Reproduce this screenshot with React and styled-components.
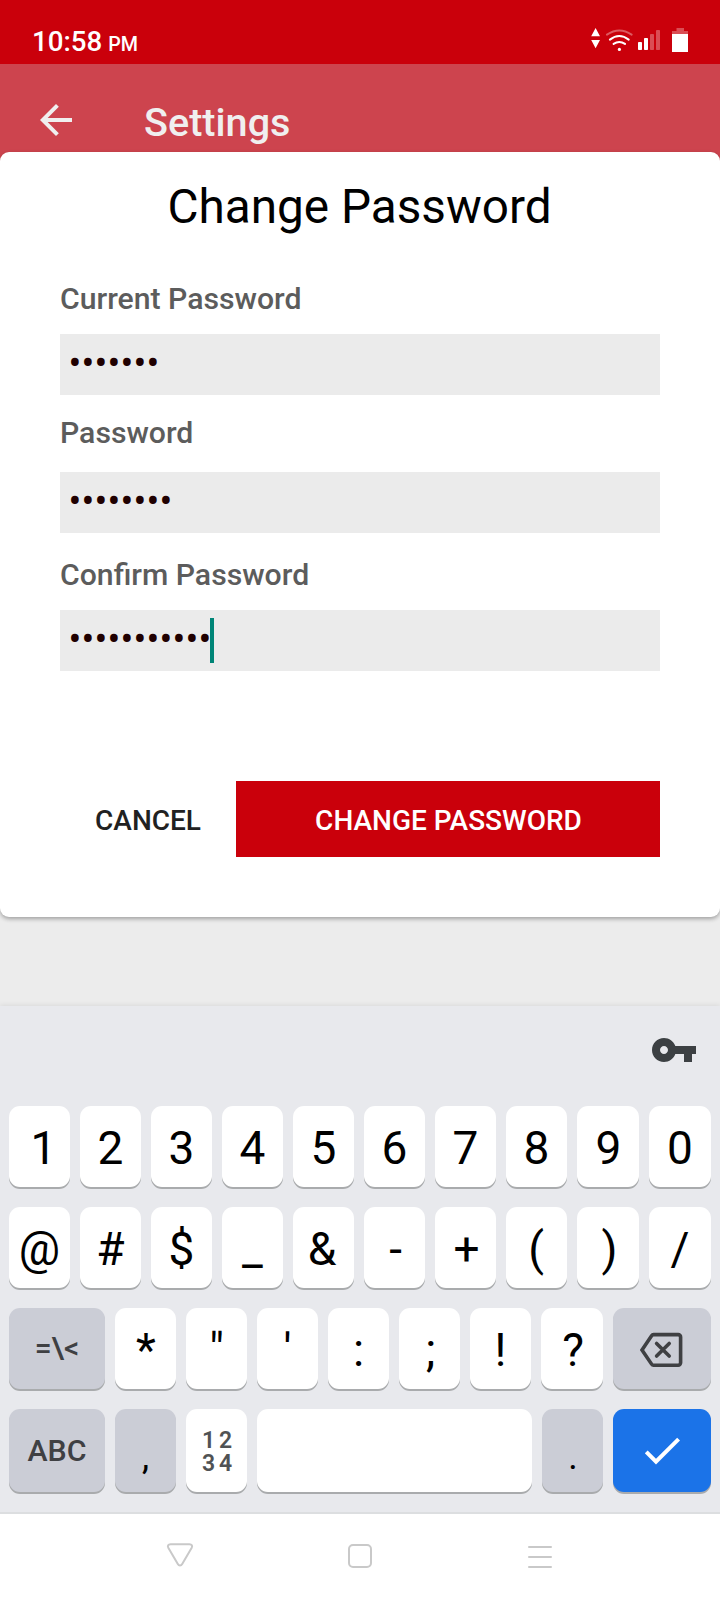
import React from "react";
import styled, { createGlobalStyle } from "styled-components";

const GlobalStyle = createGlobalStyle`
  *, *::before, *::after { box-sizing: border-box; }
  body {
    margin: 0;
    background: #ececec;
    font-family: Roboto, "Liberation Sans", sans-serif;
  }
`;

const Screen = styled.div`
  width: 720px;
  height: 1600px;
  display: flex;
  flex-direction: column;
  overflow: hidden;
  background: #ececec;
`;

const StatusBar = styled.header`
  flex: none;
  height: 64px;
  padding: 27px 32px 0 32px;
  display: flex;
  align-items: flex-start;
  justify-content: space-between;
  background: #ca000b;
  color: #fff;
`;

const Clock = styled.div`
  font-size: 27.7px;
  font-weight: 500;
  line-height: 29px;
  white-space: pre;
`;

const Meridiem = styled.span`
  font-size: 19.7px;
  margin-left: 6px;
`;

const StatusIcons = styled.svg`
  width: 98px;
  height: 26px;
  display: block;
`;

const AppBar = styled.div`
  flex: none;
  height: 112px;
  padding: 32px 32px 0;
  display: flex;
  align-items: flex-start;
  gap: 64px;
  background: #cd444e;
`;

const Icon = styled.svg`
  flex: none;
  display: block;
  width: 48px;
  height: 48px;
  fill: ${(p) => p.$color};
`;

const AppTitle = styled.h1`
  margin: 3px 0 0;
  font-size: 39.6px;
  font-weight: 500;
  line-height: 48px;
  color: #f0efef;
`;

const Card = styled.main`
  flex: none;
  position: relative;
  height: 765px;
  margin-top: -24px;
  padding: 25px 60px 60px;
  display: flex;
  flex-direction: column;
  border-radius: 9px;
  background: #fff;
  box-shadow: 0 2px 4px rgba(0, 0, 0, 0.32);
`;

const CardTitle = styled.h2`
  margin: 0 1px 0 0;
  font-size: 47.7px;
  font-weight: 400;
  line-height: 60px;
  text-align: center;
  color: #000;
`;

const Field = styled.label`
  display: flex;
  flex-direction: column;
  height: ${(p) => p.$height}px;
  justify-content: flex-end;
  gap: ${(p) => p.$gap}px;
`;

const FieldLabel = styled.span`
  font-size: 30.2px;
  font-weight: 500;
  line-height: 36px;
  color: #5c5c5c;
`;

const FieldBox = styled.span`
  height: 61px;
  padding: 8px 8px 8px 8.5px;
  display: flex;
  background: #ebebeb;
`;

const Dots = styled.span`
  font-size: 38px;
  line-height: 43px;
  letter-spacing: 0.19px;
  color: #200000;
`;

const Caret = styled.span`
  width: 4px;
  height: 45px;
  margin-left: -1.5px;
  background: #008577;
`;

const Actions = styled.div`
  margin-top: auto;
  height: 76px;
  display: flex;
`;

const Button = styled.button`
  flex: ${(p) => (p.$primary ? "1" : "0 0 176px")};
  border: 0;
  padding: 3px 0 0 ${(p) => (p.$primary ? 1 : 0)}px;
  font: 500 28px/32px Roboto, "Liberation Sans", sans-serif;
  color: ${(p) => (p.$primary ? "#fff" : "#212121")};
  background: ${(p) => (p.$primary ? "#ca000b" : "transparent")};
`;

const Backdrop = styled.div`
  flex: none;
  height: 89px;
`;

const Keyboard = styled.section`
  flex: none;
  height: 508px;
  padding: 0 9px;
  border-bottom: 2px solid #dcdee0;
  background: #e8e9ed;
  box-shadow: 0 -1px 5px rgba(0, 0, 0, 0.08);
`;

const Toolbar = styled.div`
  height: 100px;
  padding: 20px 13px 0 0;
  display: flex;
  justify-content: flex-end;
`;

const KeyRow = styled.div`
  display: grid;
  grid-template-columns: ${(p) => p.$columns};
  gap: 10px;
  height: ${(p) => p.$height || 81}px;
  margin-bottom: 20px;
`;

const tones = {
  plain: { bg: "#fff", fg: "#000" },
  muted: { bg: "#cbcdd6", fg: "#3f4043" },
  punct: { bg: "#cbcdd6", fg: "#000" },
  enter: { bg: "#1b73e8", fg: "#fff" },
};

const Key = styled.div`
  display: flex;
  align-items: center;
  justify-content: center;
  padding-top: ${(p) => p.$drop || 0}px;
  padding-bottom: ${(p) => p.$lift || 0}px;
  text-indent: ${(p) => p.$nudge || 0}px;
  border-radius: 11px;
  font-size: ${(p) => p.$size || 46}px;
  font-weight: ${(p) => p.$weight || 400};
  line-height: 54px;
  color: ${(p) => tones[p.$tone || "plain"].fg};
  background: ${(p) => tones[p.$tone || "plain"].bg};
  box-shadow: 0 2px 0 #a9abad;
`;

const NumberPad = styled.div`
  padding: 4px 0 0 5px;
  font-size: 23px;
  font-weight: 600;
  line-height: 22.5px;
  letter-spacing: 3.8px;
  white-space: pre-line;
  color: #505254;
`;

const TEN = "repeat(8, 61px) 62px 62px";

// Optical centring of glyphs with uneven side bearings.
const NUDGE = { "1": 8, "&": -3, "-": 2, "+": 2, "(": -1, ")": 3, "9": 1, "*": 1, ";": 2, "?": 2 };

const CharKeys = ({ chars }) =>
  [...chars].map((c) => (
    <Key key={c} $drop={3} $nudge={NUDGE[c]}>
      {c}
    </Key>
  ));

const NavBar = styled.nav`
  flex: 1;
  padding: 28px 90px 0;
  display: grid;
  grid-template-columns: repeat(3, 180px);
  justify-items: center;
  align-items: start;
  background: #fff;
`;

const NavIcon = styled.svg`
  width: 28px;
  height: 28px;
  display: block;
  fill: none;
  stroke: #c9c9c9;
  stroke-width: 2;
  stroke-linecap: round;
  stroke-linejoin: round;
`;

export default function App() {
  return (
    <>
      <GlobalStyle />
      <Screen>
        <StatusBar>
          <Clock>
            10:58<Meridiem>PM</Meridiem>
          </Clock>
          <StatusIcons viewBox="590 27 98 26" fill="#fff">
            <path d="M595.6 28l4.4 8.2h-8.8zM595.6 48.3l4.4-8.4h-8.8z" />
            <g fill="none" stroke="#fff" strokeWidth="2" strokeLinecap="round">
              <path d="M607 34.7q12.3-8.4 24.6 0" opacity=".35" />
              <path d="M609.9 39.6q9.4-7.2 18.8 0" />
              <path d="M613.6 43.9q5.7-3.8 11.4 0" />
            </g>
            <circle cx="619.4" cy="49.4" r="1.6" />
            <rect x="638" y="42" width="4" height="8" rx=".8" />
            <rect x="644" y="38" width="4" height="12" rx=".8" />
            <rect x="650" y="34" width="4" height="16" rx=".8" opacity=".3" />
            <rect x="656" y="30" width="4" height="20" rx=".8" opacity=".3" />
            <path d="M672 34v-3h4.5v-3h7.5v3h4v3z" opacity=".3" />
            <rect x="672" y="34" width="16" height="18" />
          </StatusIcons>
        </StatusBar>

        <AppBar>
          <Icon viewBox="0 0 24 24" $color="#f0efef">
            <path d="M20 11H7.83l5.59-5.59L12 4l-8 8 8 8 1.41-1.41L7.83 13H20v-2z" />
          </Icon>
          <AppTitle>Settings</AppTitle>
        </AppBar>

        <Card>
          <CardTitle>Change Password</CardTitle>
          <Field $height={158} $gap={17}>
            <FieldLabel>Current Password</FieldLabel>
            <FieldBox>
              <Dots>•••••••</Dots>
            </FieldBox>
          </Field>
          <Field $height={138} $gap={21}>
            <FieldLabel>Password</FieldLabel>
            <FieldBox>
              <Dots>••••••••</Dots>
            </FieldBox>
          </Field>
          <Field $height={138} $gap={17}>
            <FieldLabel>Confirm Password</FieldLabel>
            <FieldBox>
              <Dots>•••••••••••</Dots>
              <Caret />
            </FieldBox>
          </Field>
          <Actions>
            <Button>CANCEL</Button>
            <Button $primary>CHANGE PASSWORD</Button>
          </Actions>
        </Card>

        <Backdrop />

        <Keyboard>
          <Toolbar>
            <Icon viewBox="0 0 24 24" $color="#3c4043">
              <path d="M12.65 10C11.83 7.67 9.61 6 7 6c-3.31 0-6 2.69-6 6s2.69 6 6 6c2.61 0 4.83-1.67 5.65-4H17v4h4v-4h2v-4H12.65zM7 14c-1.1 0-2-.9-2-2s.9-2 2-2 2 .9 2 2-.9 2-2 2z" />
            </Icon>
          </Toolbar>
          <KeyRow $columns={TEN}>
            <CharKeys chars="1234567890" />
          </KeyRow>
          <KeyRow $columns={TEN}>
            <CharKeys chars="@#$_&-+()/" />
          </KeyRow>
          <KeyRow $columns="96px repeat(6, 61px) 62px 98px">
            <Key $tone="muted" $size={30} $weight={500} $lift={2}>{"=\\<"}</Key>
            <CharKeys chars={"*\"':;!?"} />
            <Key $tone="muted" $drop={2}>
              <Icon viewBox="-1 0 48 48" $color="none">
                <path
                  d="M14.600 8.600h24.600a2.400 2.400 0 0 1 2.400 2.400v25.800a2.400 2.400 0 0 1-2.400 2.400H14.600a2.400 2.400 0 0 1-2-1.100L3 23.900 12.600 9.700a2.400 2.400 0 0 1 2-1.100z"
                  stroke="#3f4043"
                  strokeWidth="3.6"
                />
                <path d="M17.6 17.5l12.6 12.600M30.200 17.500L17.600 30.100" stroke="#3f4043" strokeWidth="3.6" strokeLinecap="round" />
              </Icon>
            </Key>
          </KeyRow>
          <KeyRow $height={83} $columns="96px 61px 61px 275px 61px 98px">
            <Key $tone="muted" $size={30.3} $weight={500}>ABC</Key>
            <Key $tone="punct" $size={36} $drop={12}>,</Key>
            <Key>
              <NumberPad>{"12\n34"}</NumberPad>
            </Key>
            <Key />
            <Key $tone="punct" $size={36} $drop={12} $nudge={1}>.</Key>
            <Key $tone="enter">
              <Icon viewBox="0 0.25 24 24" $color="#fff">
                <path d="M9 16.17L4.83 12l-1.42 1.41L9 19 21 7l-1.41-1.41z" />
              </Icon>
            </Key>
          </KeyRow>
        </Keyboard>

        <NavBar>
          <NavIcon viewBox="0 0 28 28">
            <path d="M4.5 2.2h19c2.3 0 3.2 1.6 2.2 3.5L16.2 22c-1.1 2.1-3.3 2.1-4.4 0L2.3 5.7C1.3 3.8 2.2 2.2 4.5 2.2z" />
          </NavIcon>
          <NavIcon viewBox="0 0 28 28">
            <rect x="3" y="3" width="22" height="22" rx="4" />
          </NavIcon>
          <NavIcon viewBox="0 0 28 28">
            <path d="M3 5h22M3 15h22M3 25h22" />
          </NavIcon>
        </NavBar>
      </Screen>
    </>
  );
}
